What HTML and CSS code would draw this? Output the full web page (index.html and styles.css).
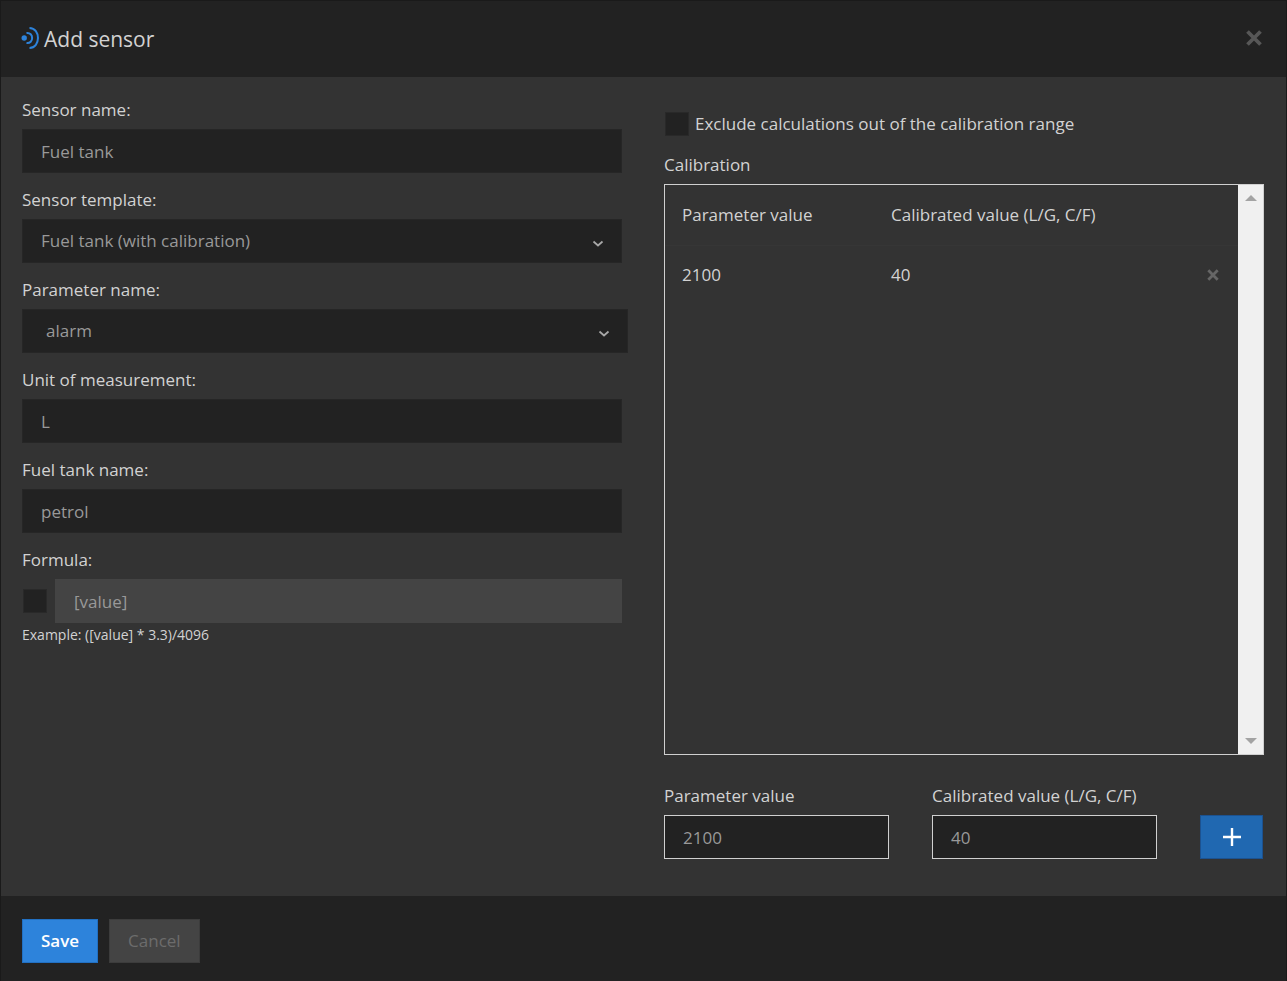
FILE: index.html
```
<!doctype html>
<html lang="en">
<head>
	<meta charset="UTF-8">
	<title>Add sensor</title>
	<link rel="stylesheet" href="styles.css">
</head>
<body>
	<div class="modal">
		<div class="modal-header">
			<svg class="sensor-icon" width="18" height="24" viewBox="0 0 18 24">
				<circle cx="3.200" cy="12" r="2.700" fill="#2d83db"/>
				<path d="M5.500 7C13 6 13 18 5.500 17" fill="none" stroke="#2d83db" stroke-width="2"/>
				<path d="M8.500 2C19.800 2 19.800 22 8.500 22" fill="none" stroke="#2d83db" stroke-width="2"/>
			</svg>
			<h1>Add sensor</h1>
			<button class="close" type="button" aria-label="Close">
				<svg width="16" height="16" viewBox="0 0 16 16"><path d="M1.500 1.500l13 13M14.500 1.500l-13 13" stroke="#575757" stroke-width="3.800"/></svg>
			</button>
		</div>
		<form class="modal-body" id="sensor-form">
			<div class="column">
				<div class="form-group">
					<label for="name">Sensor name:</label>
					<input class="form-control" id="name" type="text" value="Fuel tank">
				</div>
				<div class="form-group">
					<label for="template">Sensor template:</label>
					<div class="select">
						<select class="form-control" id="template">
							<option>Fuel tank (with calibration)</option>
						</select>
						<svg width="12" height="8" viewBox="0 0 12 8"><path d="M1.500 1.500L6 5.500l4.500-4" fill="none" stroke="#a8a8a8" stroke-width="1.700"/></svg>
					</div>
				</div>
				<div class="form-group">
					<label for="parameter">Parameter name:</label>
					<div class="select select-wide">
						<select class="form-control" id="parameter">
							<option>alarm</option>
						</select>
						<svg width="12" height="8" viewBox="0 0 12 8"><path d="M1.500 1.500L6 5.500l4.500-4" fill="none" stroke="#a8a8a8" stroke-width="1.700"/></svg>
					</div>
				</div>
				<div class="form-group">
					<label for="unit">Unit of measurement:</label>
					<input class="form-control" id="unit" type="text" value="L">
				</div>
				<div class="form-group">
					<label for="tank">Fuel tank name:</label>
					<input class="form-control" id="tank" type="text" value="petrol">
				</div>
				<div class="form-group">
					<label for="formula">Formula:</label>
					<div class="input-group">
						<input class="checkbox" type="checkbox" aria-label="Use formula">
						<input class="form-control" id="formula" type="text" value="[value]" disabled>
					</div>
					<small>Example: ([value] * 3.3)/4096</small>
				</div>
			</div>
			<div class="column">
				<div class="check-row">
					<input class="checkbox" id="exclude" type="checkbox">
					<label for="exclude">Exclude calculations out of the calibration range</label>
				</div>
				<div class="list-title">Calibration</div>
				<div class="calibration">
					<table>
						<thead>
							<tr>
								<th class="col-param">Parameter value</th>
								<th>Calibrated value (L/G, C/F)</th>
								<th class="col-action"></th>
							</tr>
						</thead>
						<tbody>
							<tr>
								<td>2100</td>
								<td>40</td>
								<td class="col-action">
									<button class="remove" type="button" aria-label="Remove">
										<svg width="12" height="12" viewBox="0 0 12 12"><path d="M1.300 1.300l9.400 9.400M10.700 1.300l-9.400 9.400" stroke="#666" stroke-width="2.800"/></svg>
									</button>
								</td>
							</tr>
						</tbody>
					</table>
					<div class="scrollbar">
						<svg width="12" height="6" viewBox="0 0 12 6"><path d="M0 6l6-6 6 6z" fill="#a3a3a3"/></svg>
						<svg width="12" height="6" viewBox="0 0 12 6"><path d="M0 0l6 6 6-6z" fill="#a3a3a3"/></svg>
					</div>
				</div>
				<div class="add-row">
					<div class="add-field">
						<label for="add-param">Parameter value</label>
						<input class="form-control bordered" id="add-param" type="text" value="2100">
					</div>
					<div class="add-field">
						<label for="add-value">Calibrated value (L/G, C/F)</label>
						<input class="form-control bordered" id="add-value" type="text" value="40">
					</div>
					<button class="btn btn-add" type="button" aria-label="Add">
						<svg width="18" height="18" viewBox="0 0 18 18"><path d="M9 0v18M0 9h18" stroke="#fff" stroke-width="2.400"/></svg>
					</button>
				</div>
			</div>
		</form>
		<div class="modal-footer">
			<button class="btn btn-save" type="submit" form="sensor-form">Save</button>
			<button class="btn btn-cancel" type="button">Cancel</button>
		</div>
	</div>
</body>
</html>
```
FILE: styles.css
```
* {
	box-sizing: border-box;
}
body {
	margin: 0;
	background: #333;
	color: #d2d2d2;
	font-family: "Open Sans", sans-serif;
	font-size: 17px;
	line-height: 24px;
}
input, select, button {
	margin: 0;
	font: inherit;
}
svg {
	display: block;
}
.modal {
	display: flex;
	flex-direction: column;
	min-height: 100vh;
	border: 1px solid #1a1a1a;
	border-bottom: 0;
	background: #333;
}
.modal-header {
	display: flex;
	align-items: center;
	gap: 5px;
	height: 76px;
	padding: 0 24px 2px 20px;
	background: #222;
}
.modal-header h1 {
	flex: 1;
	margin: 0;
	padding-top: 2px;
	font-size: 21px;
	font-weight: 400;
	line-height: 28px;
}
.close, .remove {
	padding: 0;
	border: 0;
	background: none;
	cursor: pointer;
}
.modal-body {
	flex: 1;
	display: grid;
	grid-template-columns: 1fr 1fr;
	gap: 42px;
	padding: 21px 22px 37px 21px;
}
.column {
	display: flex;
	flex-direction: column;
	min-width: 0;
}
.form-group {
	margin-bottom: 15px;
}
.form-group label, .add-field label {
	display: block;
	margin-bottom: 7px;
}
.form-control {
	display: block;
	width: 100%;
	min-width: 0;
	height: 44px;
	padding: 0 18px;
	border: 1px solid #262626;
	border-radius: 0;
	background: #222;
	color: #999;
	outline: none;
}
.form-control:disabled {
	border-color: #444;
	background: #444;
}
.bordered {
	border-color: #d0d0d0;
}
.select {
	display: grid;
	align-items: center;
}
.select select, .select svg {
	grid-area: 1 / 1;
}
.select select {
	appearance: none;
	padding: 0 18px;
}
.select svg {
	justify-self: end;
	margin: 5px 18px 0 0;
	pointer-events: none;
}
.select-wide {
	margin-right: -6px;
}
.select-wide select {
	padding-left: 23px;
}
.input-group {
	display: flex;
	align-items: center;
	gap: 8px;
	padding-left: 1px;
}
.checkbox {
	appearance: none;
	flex: none;
	width: 24px;
	height: 24px;
	border: 1px solid #292929;
	background: #222;
}
small {
	display: block;
	font-size: 14px;
}
.check-row {
	display: flex;
	align-items: center;
	gap: 6px;
	margin: 14px 0 17px;
	padding-left: 1px;
}
.list-title {
	margin-bottom: 7px;
}
.calibration {
	flex: 1;
	display: flex;
	align-items: flex-start;
	margin-bottom: 29px;
	border: 1px solid #d0d0d0;
}
table {
	flex: 1;
	border-collapse: collapse;
}
th, td {
	height: 60px;
	padding: 0 0 0 17px;
	font-weight: 400;
	text-align: left;
}
th {
	border-bottom: 1px solid #363636;
}
.col-param {
	width: 209px;
}
.col-action {
	width: 48px;
}
.scrollbar {
	align-self: stretch;
	display: flex;
	flex-direction: column;
	justify-content: space-between;
	align-items: center;
	width: 25px;
	padding: 10px 0;
	background: #f0f0f0;
}
.add-row {
	display: flex;
	align-items: flex-end;
	gap: 43px;
	padding-right: 1px;
}
.add-field {
	flex: 1;
	min-width: 0;
}
.btn {
	height: 44px;
	padding: 0 18px;
	border: 1px solid transparent;
	cursor: pointer;
}
.btn-add {
	width: 63px;
	padding: 0 22px;
	border-color: #1c5290;
	background: #2068b1;
}
.btn-save {
	border-color: #2270c2;
	background: #2d83db;
	color: #fff;
	font-weight: 600;
}
.btn-cancel {
	border-color: #3c3c3c;
	background: #444;
	color: #6c6c6c;
}
.modal-footer {
	display: flex;
	gap: 11px;
	padding: 23px 21px 18px;
	background: #222;
}
```
